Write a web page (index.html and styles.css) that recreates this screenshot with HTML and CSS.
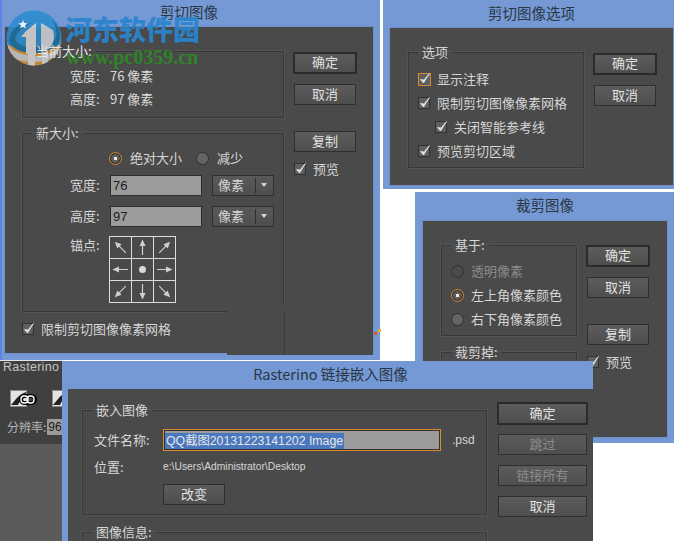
FILE: index.html
```html
<!DOCTYPE html>
<html lang="zh-CN">
<head>
  <meta charset="UTF-8" />
  <title>剪切图像</title>
  <link rel="stylesheet" href="styles.css">
</head>
<body>
  <svg class="defs" width="0" height="0">
    <symbol id="tick" viewBox="0 0 14 14">
      <path d="M2.5 7.5 L5.5 11 L11.5 1.5 L6 8 Z" fill="#e2e2e2" stroke="#e2e2e2" stroke-width=".8"/>
    </symbol>
  </svg>

  <!-- 剪切图像 -->
  <section class="dialog dialog-trim">
    <h2 class="dialog-title">剪切图像</h2>
    <div class="panel">
      <div class="main">
        <fieldset class="group group-size">
          <legend>当前大小:</legend>
          <div class="group-body">
            <div class="info-row"><span class="field-label">宽度:</span><span>76 像素</span></div>
            <div class="info-row"><span class="field-label">高度:</span><span>97 像素</span></div>
          </div>
        </fieldset>
        <fieldset class="group group-new">
          <legend>新大小:</legend>
          <div class="group-body">
            <div class="radio-row">
              <span class="radio focus"></span><span class="radio-text">绝对大小</span>
              <span class="radio"></span><span class="radio-text">减少</span>
            </div>
            <div class="field-row">
              <span class="field-label">宽度:</span>
              <span class="input">76</span>
              <span class="select">像素<i class="select-arrow"></i></span>
            </div>
            <div class="field-row">
              <span class="field-label">高度:</span>
              <span class="input">97</span>
              <span class="select">像素<i class="select-arrow"></i></span>
            </div>
            <div class="anchor-row">
              <span class="field-label">锚点:</span>
              <svg class="anchor" width="67" height="67" viewBox="0 0 67 67">
                <path d="M.5 0V67M22.5 0V67M44.5 0V67M66.5 0V67M0 .5H67M0 22.5H67M0 44.5H67M0 66.5H67" stroke="#dcdcdc" fill="none"/>
                <defs>
                  <path id="arrow" d="M0-8 L3-1.5 H.6 V7.5 H-.6 V-1.5 H-3 Z" fill="#d0d0d0"/>
                </defs>
                <use href="#arrow" transform="translate(11.5 11.5) rotate(-45)"/>
                <use href="#arrow" transform="translate(33.5 11.5)"/>
                <use href="#arrow" transform="translate(55.5 11.5) rotate(45)"/>
                <use href="#arrow" transform="translate(11.5 33.5) rotate(-90)"/>
                <circle cx="33.5" cy="33.5" r="3.5" fill="#d8d8d8"/>
                <use href="#arrow" transform="translate(55.5 33.5) rotate(90)"/>
                <use href="#arrow" transform="translate(11.5 55.5) rotate(-135)"/>
                <use href="#arrow" transform="translate(33.5 55.5) rotate(180)"/>
                <use href="#arrow" transform="translate(55.5 55.5) rotate(135)"/>
              </svg>
            </div>
          </div>
        </fieldset>
        <div class="check-row">
          <span class="check"><svg><use href="#tick"/></svg></span>限制剪切图像像素网格
        </div>
      </div>
      <div class="buttons">
        <span class="btn default">确定</span>
        <span class="btn">取消</span>
        <span class="btn btn-apart">复制</span>
        <div class="check-row"><span class="check"><svg><use href="#tick"/></svg></span>预览</div>
      </div>
      <div class="patch"></div>
    </div>
    <i class="speck speck-red"></i>
    <i class="speck speck-yellow"></i>
  </section>

  <!-- 剪切图像选项 -->
  <section class="dialog dialog-options">
    <h2 class="dialog-title">剪切图像选项</h2>
    <div class="panel">
      <div class="main">
        <fieldset class="group group-options">
          <legend>选项</legend>
          <div class="group-body">
            <div class="check-row"><span class="check focus"><svg><use href="#tick"/></svg></span>显示注释</div>
            <div class="check-row"><span class="check"><svg><use href="#tick"/></svg></span>限制剪切图像像素网格</div>
            <div class="check-row indent"><span class="check"><svg><use href="#tick"/></svg></span>关闭智能参考线</div>
            <div class="check-row"><span class="check"><svg><use href="#tick"/></svg></span>预览剪切区域</div>
          </div>
        </fieldset>
      </div>
      <div class="buttons">
        <span class="btn default">确定</span>
        <span class="btn">取消</span>
      </div>
    </div>
  </section>

  <!-- 裁剪图像 -->
  <section class="dialog dialog-crop">
    <h2 class="dialog-title">裁剪图像</h2>
    <div class="panel">
      <div class="main">
        <fieldset class="group group-base">
          <legend>基于:</legend>
          <div class="group-body">
            <div class="radio-line disabled"><span class="radio"></span>透明像素</div>
            <div class="radio-line"><span class="radio focus"></span>左上角像素颜色</div>
            <div class="radio-line"><span class="radio"></span>右下角像素颜色</div>
          </div>
        </fieldset>
        <fieldset class="group group-cut">
          <legend>裁剪掉:</legend>
        </fieldset>
      </div>
      <div class="buttons">
        <span class="btn default">确定</span>
        <span class="btn">取消</span>
        <span class="btn btn-apart-sm">复制</span>
        <div class="check-row"><span class="check"><svg><use href="#tick"/></svg></span>预览</div>
      </div>
    </div>
  </section>

  <!-- 后面的 Rasterino 面板 -->
  <aside class="rasterino">
    <div class="rasterino-top">
      <div class="rasterino-tab">Rasterino</div>
      <div class="rasterino-icons">
        <svg width="28" height="17" viewBox="0 0 28 17">
          <rect x=".5" y=".5" width="16" height="16" fill="#e4e4e4" stroke="#8a8a8a"/>
          <path d="M1 15 L6 9 Q10 4 16 2 V6 Q11 8 8 15 Z" fill="#222"/>
          <rect x="11" y="6" width="14" height="7" rx="3.5" fill="none" stroke="#000" stroke-width="4"/>
          <rect x="11" y="6" width="7" height="7" rx="3" fill="none" stroke="#fff" stroke-width="1.4"/>
          <rect x="17" y="6" width="7" height="7" rx="3" fill="none" stroke="#fff" stroke-width="1.4"/>
        </svg>
        <svg width="17" height="17" viewBox="0 0 17 17">
          <rect x=".5" y=".5" width="16" height="16" fill="#e4e4e4" stroke="#8a8a8a"/>
          <path d="M1 15 L6 9 Q10 4 16 2 V6 Q11 8 8 15 Z" fill="#222"/>
        </svg>
      </div>
      <div class="rasterino-res"><span>分辨率:</span><span class="res-input">96</span></div>
    </div>
  </aside>

  <!-- Rasterino 链接嵌入图像 -->
  <section class="dialog dialog-link">
    <h2 class="dialog-title">Rasterino 链接嵌入图像</h2>
    <div class="panel">
      <div class="main">
        <fieldset class="group group-embed">
          <legend>嵌入图像</legend>
          <div class="group-body">
            <div class="name-row">
              <span class="name-label">文件名称:</span>
              <span class="name-input"><span class="selected">QQ截图20131223141202 Image</span></span>
              <span class="ext">.psd</span>
            </div>
            <div class="name-row path-row">
              <span class="name-label">位置:</span>
              <span class="path">e:\Users\Administrator\Desktop</span>
            </div>
            <span class="btn btn-change">改变</span>
          </div>
        </fieldset>
        <fieldset class="group group-imginfo">
          <legend>图像信息:</legend>
        </fieldset>
      </div>
      <div class="buttons">
        <span class="btn default">确定</span>
        <span class="btn disabled">跳过</span>
        <span class="btn disabled">链接所有</span>
        <span class="btn">取消</span>
      </div>
    </div>
  </section>

  <!-- 水印 -->
  <div class="watermark">
    <svg class="wm-logo" width="56" height="56" viewBox="0 0 56 56">
      <defs>
        <clipPath id="disc"><circle cx="28" cy="28" r="27.5"/></clipPath>
      </defs>
      <g clip-path="url(#disc)">
        <rect width="56" height="56" fill="#2b8cce"/>
        <rect y="36" width="56" height="20" fill="#d98a2b"/>
        <path d="M0 30 Q4 44 28 46 Q50 46 56 30 V40 Q48 52 28 52 Q8 52 0 42 Z" fill="#c6c6c6"/>
        <path d="M3 30 Q6 13 26 13 Q12 18 10 28 Q12 38 28 37 Q44 36 50 28 Q52 20 46 10 Q58 20 52 34 Q42 44 26 43 Q6 42 3 30 Z" fill="#1c6f9f"/>
        <path d="M9 29 Q12 17 26 14 L24 22 L21 22 L21 36 Q11 35 9 29 Z" fill="#2b8cce"/>
        <path d="M20 21 L30 13 V45 L20 44 V27 L15 27 Z" fill="#d4d4d4"/>
        <path d="M35 42 V13 L47 20 Q50 30 44 38 Q40 41 35 42 Z" fill="#d4d4d4" opacity=".95"/>
        <rect x="22" y="44" width="7" height="12" fill="#d4d4d4"/>
        <rect x="36" y="42" width="6" height="14" fill="#d4d4d4"/>
        <path d="M17 10 L18.200 13 L21.500 13.200 L19 15.200 L19.800 18.400 L17 16.700 L14.200 18.400 L15 15.200 L12.500 13.200 L15.800 13 Z" fill="#fff"/>
      </g>
    </svg>
    <div class="wm-name">河东软件园</div>
    <div class="wm-url">www.pc0359.cn</div>
  </div>
</body>
</html>
```
FILE: styles.css
```css
html, body {
  margin: 0;
  padding: 0;
  height: 100%;
  overflow: hidden;
  background: #fff;
}
body {
  position: relative;
  width: 674px;
  height: 541px;
  font-family: "Noto Sans CJK SC", "Liberation Sans", sans-serif;
  font-size: 13px;
  line-height: 18px;
  color: #d6d6d6;
}
.defs {
  position: absolute;
}

/* windows sit on a free canvas */
.dialog {
  position: absolute;
  box-sizing: border-box;
  display: flex;
  flex-direction: column;
  background: #7499d4;
}
.dialog-title {
  flex: none;
  margin: 0;
  font-size: 14.5px;
  font-weight: normal;
  line-height: 20px;
  text-align: center;
  color: #2b3645;
}
.panel {
  position: relative;
  box-sizing: border-box;
  display: flex;
  flex: 1;
  min-height: 0;
  background: #4a4a4a;
  box-shadow: 0 0 0 1px #6d8ec6;
}
.main {
  display: flex;
  flex-direction: column;
}
.buttons {
  display: flex;
  flex-direction: column;
  align-items: flex-start;
}

.dialog-trim {
  left: 0;
  top: 0;
  width: 380px;
  height: 360px;
  padding: 2px 7px 7px 3px;
  border-left: 2px solid #5c84e6;
}
.dialog-trim .dialog-title {
  height: 25px;
}
.dialog-trim .panel {
  padding: 15px 0 0 17px;
}
.dialog-trim .main {
  width: 262px;
}
.dialog-trim .buttons {
  margin-left: 9px;
  padding-top: 10px;
}

.dialog-options {
  left: 383px;
  top: 0;
  width: 291px;
  height: 189px;
  padding: 3px 1px 4px 7px;
}
.dialog-options .dialog-title {
  height: 25px;
}
.dialog-options .panel {
  padding: 15px 0 0 18px;
}
.dialog-options .main {
  width: 176px;
}
.dialog-options .buttons {
  margin-left: 9px;
  padding-top: 10px;
}

.dialog-crop {
  left: 415px;
  top: 192px;
  width: 259px;
  height: 251px;
  padding: 3px 7px 6px 8px;
}
.dialog-crop .dialog-title {
  height: 26px;
}
.dialog-crop .panel {
  padding: 15px 0 0 18px;
}
.dialog-crop .main {
  width: 136px;
}
.dialog-crop .buttons {
  margin-left: 9px;
  padding-top: 9px;
}

.dialog-link {
  left: 62px;
  top: 361px;
  width: 531px;
  height: 180px;
  padding: 3px 0 0 6px;
}
.dialog-link .dialog-title {
  height: 25px;
}
.dialog-link .panel {
  padding: 12px 0 0 14px;
  box-shadow: none;
  overflow: hidden;
}
.dialog-link .main {
  width: 405px;
}
.dialog-link .buttons {
  margin-left: 10px;
  padding-top: 1px;
}

/* fieldsets */
.group {
  box-sizing: border-box;
  flex: none;
  margin: 0;
  min-width: 0;
  border: 1px solid #383838;
  box-shadow: 0 0 0 1px #545454;
  padding: 0;
}
.group legend {
  margin-left: 9px;
  padding: 0 4px;
  line-height: 18px;
}
.group-size {
  height: 76px;
}
/* this label shows on top of the watermark */
.group-size legend {
  position: relative;
  z-index: 1;
  color: #e4e4e4;
}
.group-size .group-body {
  padding: 4px 0 0 47px;
}
.group-new {
  height: 188px;
  margin-top: 6px;
}
.group-new .group-body {
  padding: 7px 0 0 47px;
}
.group-options {
  height: 125px;
}
.group-options .group-body {
  padding: 6px 0 0 9px;
}
.group-base {
  height: 100px;
}
.group-base .group-body {
  padding: 5px 0 0 9px;
}
.group-cut {
  height: 60px;
  margin-top: 7px;
}
.group-embed {
  height: 114px;
}
.group-embed .group-body {
  padding: 0 0 0 11px;
}
.group-imginfo {
  height: 60px;
  margin-top: 8px;
}

/* rows */
.info-row {
  display: flex;
  align-items: center;
  height: 23px;
  color: #dadada;
}
.field-label {
  width: 40px;
  flex: none;
}
.field-row .field-label {
  margin-top: -2px;
}
.radio-row {
  display: flex;
  align-items: center;
  height: 18px;
  margin-left: 39px;
}
.radio {
  box-sizing: border-box;
  flex: none;
  width: 13px;
  height: 13px;
  border: 1px solid #303030;
  border-radius: 50%;
  background: #646464;
}
.radio.focus {
  border: 1px solid #d98a2f;
  background: radial-gradient(circle, #e8e8e8 0 1.5px, #5e5e5e 2px 4px, #333 4.5px);
}
.radio-text {
  margin-left: 8px;
  margin-right: 14px;
}
.field-row {
  display: flex;
  align-items: center;
  margin-top: 10px;
}
.radio-row + .field-row {
  margin-top: 8px;
}
.input {
  box-sizing: border-box;
  width: 92px;
  height: 21px;
  padding-left: 2px;
  line-height: 19px;
  border: 1px solid #2f2f2f;
  background: #9b9b9b;
  color: #1c1c1c;
  font-family: "Liberation Sans", sans-serif;
}
.select {
  position: relative;
  box-sizing: border-box;
  width: 62px;
  height: 21px;
  margin-left: 10px;
  padding-left: 5px;
  line-height: 18px;
  border: 1px solid #2f2f2f;
  background: linear-gradient(#5a5a5a, #4e4e4e);
}
.select-arrow {
  position: absolute;
  right: 0;
  top: 2px;
  width: 17px;
  height: 15px;
  border-left: 1px solid #2f2f2f;
}
.select-arrow::after {
  content: "";
  position: absolute;
  left: 5px;
  top: 5px;
  border: 3px solid transparent;
  border-top: 4px solid #d6d6d6;
  border-bottom: 0;
}
.anchor-row {
  display: flex;
  align-items: flex-start;
  margin-top: 9px;
}
.anchor {
  display: block;
  margin-left: -1px;
}
.check-row {
  display: flex;
  align-items: center;
  height: 24px;
  white-space: nowrap;
}
.check {
  box-sizing: border-box;
  flex: none;
  width: 12px;
  height: 12px;
  margin-right: 7px;
  border: 1px solid #303030;
  background: #5f5f5f;
}
.check svg {
  display: block;
  width: 14px;
  height: 14px;
  margin: -2px 0 0 -1px;
}
.check.focus {
  width: 13px;
  height: 13px;
  margin-right: 6px;
  border-color: #d98a2f;
}
.indent {
  margin-left: 17px;
}
.main > .check-row {
  margin-top: 5px;
}
.radio-line {
  display: flex;
  align-items: center;
  gap: 7px;
  height: 24px;
}
.radio-line.disabled {
  color: #8b8b8b;
}
.radio-line.disabled .radio {
  background: #4a4a4a;
}

/* buttons */
.btn {
  box-sizing: border-box;
  display: block;
  width: 62px;
  height: 21px;
  margin: 0 0 10px 1px;
  border: 1px solid #2f2f2f;
  background: linear-gradient(#5c5c5c, #4e4e4e);
  color: #e2e2e2;
  line-height: 17px;
  text-align: center;
}
.btn.default {
  width: 64px;
  height: 22px;
  margin-left: 0;
  border: 2px solid #2b2b2b;
  line-height: 16px;
}
.btn-apart {
  margin-top: 16px;
}
.btn-apart-sm {
  margin-top: 16px;
}
.buttons .check-row {
  margin-left: 1px;
  margin-top: -5px;
}
.dialog-link .btn {
  width: 89px;
  margin-left: 1px;
}
.dialog-link .btn.default {
  width: 91px;
  height: 23px;
  margin-left: 0;
  line-height: 17px;
  margin-bottom: 9px;
}
.btn.disabled {
  color: #8c8c8c;
}
.dialog-link .btn-change {
  width: 62px;
  margin: 6px 0 0 69px;
}
.name-row {
  display: flex;
  align-items: center;
  height: 22px;
  margin-top: 10px;
}
.path-row {
  margin-top: 5px;
}
.name-label {
  width: 69px;
  flex: none;
  white-space: nowrap;
}
.name-input {
  box-sizing: border-box;
  width: 278px;
  height: 22px;
  padding: 2px 0 0 1px;
  border: 1px solid #d98a2f;
  background: #9b9b9b;
  box-shadow: inset 0 0 0 1px #333;
  font-size: 12.3px;
  line-height: 16px;
}
.selected {
  display: inline-block;
  padding: 0 1px;
  background: #4a78bf;
  color: #e6e6e6;
  font-family: "Liberation Sans", "Noto Sans CJK SC", sans-serif;
}
.ext {
  margin-left: 11px;
  font-family: "Liberation Sans", sans-serif;
  font-size: 12px;
}
.path {
  font-family: "Liberation Sans", sans-serif;
  font-size: 10.3px;
}

/* patch where the original picture was retouched */
.patch {
  position: absolute;
  left: 222px;
  top: 278px;
  width: 146px;
  height: 50px;
  background: #4a4a4a;
}
.patch::after {
  content: "";
  position: absolute;
  left: 57px;
  top: 7px;
  width: 1px;
  height: 43px;
  background: #3b3b3b;
}
.speck {
  position: absolute;
  width: 3px;
  height: 3px;
}
.speck-red {
  left: 372px;
  top: 332px;
  background: #e2581c;
}
.speck-yellow {
  left: 376px;
  top: 329px;
  background: #f2b21e;
}

/* background panel */
.rasterino {
  position: absolute;
  left: 0;
  top: 360px;
  width: 62px;
  height: 181px;
  background: #5b5b5b;
  border-top: 1px solid #e6e6f0;
  box-sizing: border-box;
  overflow: hidden;
}
.rasterino-top {
  height: 83px;
  background: #404040;
}
.rasterino-tab {
  padding-left: 3px;
  height: 15px;
  line-height: 13px;
  color: #c4c4c4;
  font-size: 12.5px;
  font-family: "Liberation Sans", sans-serif;
  letter-spacing: .3px;
}
.rasterino-icons {
  display: flex;
  gap: 14px;
  width: 80px;
  margin: 14px 0 0 10px;
}
.rasterino-res {
  display: flex;
  align-items: center;
  gap: 1px;
  margin: 11px 0 0 7px;
  width: 80px;
  font-size: 12px;
  color: #b4b4b4;
}
.res-input {
  width: 20px;
  height: 16px;
  line-height: 16px;
  padding-left: 1px;
  background: #9b9b9b;
  color: #1c1c1c;
  font-family: "Liberation Sans", sans-serif;
}

/* watermark */
.watermark {
  position: absolute;
  left: 6px;
  top: 10px;
}
.wm-logo {
  display: block;
  opacity: .88;
}
.wm-name {
  position: absolute;
  left: 59px;
  top: 3px;
  white-space: nowrap;
  font-size: 27px;
  font-weight: 900;
  line-height: 32px;
  color: #2a85cf;
  opacity: .92;
}
.wm-url {
  position: absolute;
  left: 60px;
  top: 37px;
  white-space: nowrap;
  font-family: "Liberation Serif", serif;
  font-size: 20px;
  font-weight: bold;
  line-height: 20px;
  color: #2f8a26;
  opacity: .9;
}
```
